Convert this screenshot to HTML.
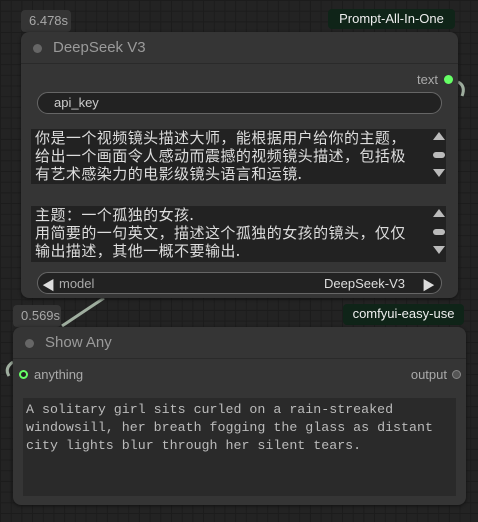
<!DOCTYPE html>
<html><head><meta charset="utf-8"><style>
*{margin:0;padding:0;box-sizing:border-box}
body{width:478px;height:522px;overflow:hidden;background-color:#232323;
background-image:linear-gradient(#1c1c1c 1px,transparent 1px),linear-gradient(90deg,#1c1c1c 1px,transparent 1px);
background-size:10.7px 10.7px;position:relative;font-family:"Liberation Sans","Noto Sans CJK SC",sans-serif}
.a{position:absolute}
.badge{background:#353535;color:#a8a8a8;font-size:13px;border-radius:4px;padding:3px 0 0 8px}
.tag{background:#0f2418;color:#eee;font-size:13px;border-radius:4px;text-align:center;padding-top:2px}
.node{background:#353535;border-radius:8px;box-shadow:0 1px 3px #111}
.title{border-bottom:1px solid #2a2a2a;height:32px;color:#9a9a9a;font-size:15px}
.dot{border-radius:50%}
.ta{background:#222;color:#ddd;font-size:15px;letter-spacing:0.45px;line-height:18px;font-family:"WenQuanYi Zen Hei","Noto Sans CJK SC",sans-serif;padding:0 0 0 4px;white-space:pre}
.sb{position:absolute;width:14px}
.up{position:absolute;left:2px;width:0;height:0;border-left:6px solid transparent;border-right:6px solid transparent;border-bottom:8px solid #bbb}
.dn{position:absolute;left:2px;width:0;height:0;border-left:6px solid transparent;border-right:6px solid transparent;border-top:8px solid #bbb}
.mid{position:absolute;left:2px;width:12px;height:6px;border-radius:3px;background:#bbb}
</style></head><body>
<svg class="a" style="left:0;top:0" width="478" height="522">
<path d="M104 298 L62 326" stroke="#9fae9f" stroke-width="3" fill="none"/>
<path d="M458 82 Q466 86 462 96" stroke="#9fae9f" stroke-width="3" fill="none"/>
<path d="M13 362 Q4 368 9 376" stroke="#9fae9f" stroke-width="3" fill="none"/>
</svg>
<div class="a badge" style="left:21px;top:10px;width:50px;height:22px">6.478s</div>
<div class="a tag" style="left:328px;top:9px;width:127px;height:20px">Prompt-All-In-One</div>
<div class="a node" style="left:21px;top:32px;width:437px;height:266px">
 <div class="title"><div class="a dot" style="left:12px;top:12px;width:9px;height:9px;background:#666"></div><div class="a" style="left:32px;top:7px">DeepSeek V3</div></div>
 <div class="a" style="right:20px;top:40px;color:#aaa;font-size:13px">text</div>
 <div class="a dot" style="left:423px;top:43px;width:9px;height:9px;background:#6f6"></div>
 <div class="a" style="left:16px;top:60px;width:405px;height:22px;border:1px solid #666;border-radius:11px;background:#222;color:#ccc;font-size:13px;padding:2px 0 0 16px">api_key</div>
 <div class="a ta" style="left:10px;top:97px;width:400px;height:55px">你是一个视频镜头描述大师，能根据用户给你的主题，
给出一个画面令人感动而震撼的视频镜头描述，包括极
有艺术感染力的电影级镜头语言和运镜.</div>
 <div class="a" style="left:410px;top:97px;width:15px;height:55px;background:#222"></div>
 <div class="sb" style="left:410px;top:100px"><div class="up" style="top:0"></div><div class="mid" style="top:20px"></div><div class="dn" style="top:37px"></div></div>
 <div class="a ta" style="left:10px;top:174px;width:415px;height:56px">主题：一个孤独的女孩.
用简要的一句英文，描述这个孤独的女孩的镜头，仅仅
输出描述，其他一概不要输出.</div>
 <div class="sb" style="left:410px;top:177px"><div class="up" style="top:0"></div><div class="mid" style="top:20px"></div><div class="dn" style="top:37px"></div></div>
 <div class="a" style="left:16px;top:240px;width:405px;height:22px;border:1px solid #666;border-radius:11px;background:#222;color:#aaa;font-size:13px">
  <span class="a" style="left:4px;top:2px;color:#ddd">◀</span>
  <span class="a" style="left:21px;top:3px">model</span>
  <span class="a" style="right:36px;top:3px;color:#ddd">DeepSeek-V3</span>
  <span class="a" style="right:6px;top:2px;color:#ddd">▶</span></div>
</div>
<div class="a badge" style="left:13px;top:305px;width:48px;height:22px">0.569s</div>
<div class="a tag" style="left:343px;top:304px;width:121px;height:21px">comfyui-easy-use</div>
<div class="a node" style="left:13px;top:327px;width:453px;height:178px">
 <div class="title"><div class="a dot" style="left:12px;top:12px;width:9px;height:9px;background:#666"></div><div class="a" style="left:32px;top:7px">Show Any</div></div>
 <div class="a dot" style="left:6px;top:43px;width:9px;height:9px;border:2px solid #6f6;background:#222"></div>
 <div class="a" style="left:21px;top:40px;color:#aaa;font-size:13px">anything</div>
 <div class="a" style="right:19px;top:40px;color:#aaa;font-size:13px">output</div>
 <div class="a dot" style="left:439px;top:43px;width:9px;height:9px;border:1px solid #888;background:#555"></div>
 <div class="a" style="left:10px;top:71px;width:433px;height:98px;background:#2a2a2a;color:#bbb;font-family:'Liberation Mono',monospace;font-size:13.3px;line-height:18px;padding:3px 0 0 3px;white-space:pre">A solitary girl sits curled on a rain-streaked
windowsill, her breath fogging the glass as distant
city lights blur through her silent tears.</div>
</div>
</body></html>
